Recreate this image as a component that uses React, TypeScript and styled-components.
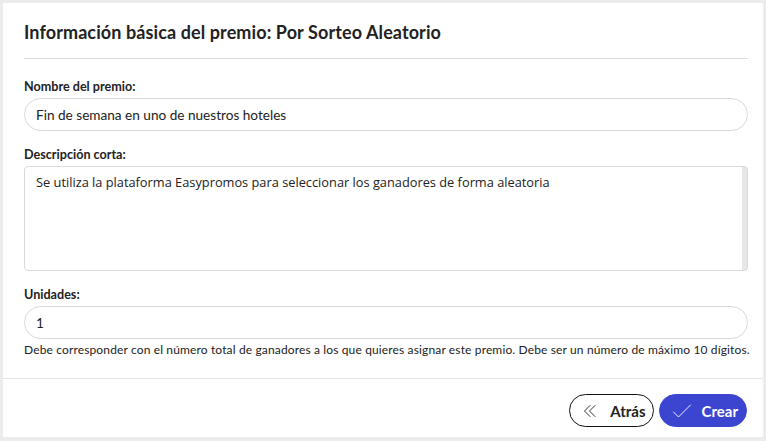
import React from "react";
import styled, { createGlobalStyle } from "styled-components";

const Global = createGlobalStyle`
  html, body { margin: 0; padding: 0; background: #ececec; }
  body { font-family: "Lato", "Noto Sans", sans-serif; color: #222; }
  * { box-sizing: border-box; }
`;

const Page = styled.div`
  padding: 3px;
  width: 766px;
  height: 441px;
`;

const Card = styled.div`
  background: #fff;
  width: 760px;
  height: 434px;
  display: flex;
  flex-direction: column;
`;

const Header = styled.div`
  padding: 17px 15px 0 21px;
`;

const Title = styled.h1`
  margin: 0;
  font-size: 18px;
  letter-spacing: 0.1px;
  line-height: 24px;
  font-weight: 700;
  color: #222;
  padding-bottom: 14px;
  border-bottom: 1px solid #dcdcdc;
`;

const Body = styled.div`
  padding: 19px 15px 0 21px;
  display: flex;
  flex-direction: column;
`;

const Field = styled.div<{ $gap?: number }>`
  display: flex;
  flex-direction: column;
  margin-bottom: ${(p) => p.$gap ?? 15}px;
`;

const Label = styled.label`
  font-size: 12.6px;
  line-height: 18px;
  font-weight: 700;
  color: #222;
  margin-bottom: 2px;
`;

const Input = styled.input`
  height: 33px;
  width: 100%;
  border: 1px solid #d9d9d9;
  border-radius: 17px;
  padding: 0 11px;
  font-family: "Lato", "Noto Sans", sans-serif;
  font-size: 13.6px;
  color: #222;
  outline: none;
  background: #fff;
`;

const TextArea = styled.textarea`
  height: 105px;
  width: 100%;
  border: 1px solid #d9d9d9;
  border-radius: 4px;
  padding: 6px 11px;
  font-family: "Open Sans", "DejaVu Sans", sans-serif;
  font-size: 12.8px;
  line-height: 18px;
  color: #222;
  resize: none;
  overflow: hidden;
  outline: none;
  background: linear-gradient(to left, #e7e7e7 5px, #fff 5px);
`;

const Help = styled.div`
  margin-top: 4px;
  font-size: 12px;
  letter-spacing: 0.14px;
  line-height: 14px;
  color: #222;
  white-space: nowrap;
`;

const Footer = styled.div`
  margin-top: auto;
  border-top: 1px solid #e6e6e6;
  height: 59px;
  padding: 15px 16px 0 0;
  display: flex;
  justify-content: flex-end;
  align-items: flex-start;
  gap: 5px;
`;

const Button = styled.button<{ $primary?: boolean }>`
  height: 33px;
  border-radius: 17px;
  display: flex;
  align-items: center;
  gap: ${(p) => (p.$primary ? 10 : 13)}px;
  padding: 0 ${(p) => (p.$primary ? 8 : 7)}px 0 ${(p) => (p.$primary ? 12 : 13)}px;
  font-family: "Lato", "Noto Sans", sans-serif;
  font-size: 15px;
  font-weight: 700;
  cursor: pointer;
  border: 1px solid ${(p) => (p.$primary ? "#3c45cf" : "#111")};
  background: ${(p) => (p.$primary ? "#3c45cf" : "#fff")};
  color: ${(p) => (p.$primary ? "#fff" : "#222")};
`;

const DoubleChevron = () => (
  <svg width="14" height="16" viewBox="0 0 14 16" fill="none" stroke="#333" strokeWidth="1" strokeLinecap="round" strokeLinejoin="round">
    <path d="M7 2.5 L1.5 8 L7 13.5" />
    <path d="M12 2.5 L6.5 8 L12 13.5" />
  </svg>
);

const Check = () => (
  <svg width="20" height="16" viewBox="0 0 20 16" fill="none" stroke="#fff" strokeWidth="0.9" strokeLinecap="round" strokeLinejoin="round">
    <path d="M1.5 9 L6.5 14 L18.5 2" />
  </svg>
);

export default function App() {
  return (
    <>
      <Global />
      <Page>
        <Card>
          <Header>
            <Title>Información básica del premio: Por Sorteo Aleatorio</Title>
          </Header>
          <Body>
            <Field>
              <Label>Nombre del premio:</Label>
              <Input readOnly defaultValue="Fin de semana en uno de nuestros hoteles" />
            </Field>
            <Field>
              <Label>Descripción corta:</Label>
              <TextArea
                readOnly
                defaultValue="Se utiliza la plataforma Easypromos para seleccionar los ganadores de forma aleatoria"
              />
            </Field>
            <Field $gap={0}>
              <Label>Unidades:</Label>
              <Input readOnly defaultValue="1" />
              <Help>
                Debe corresponder con el número total de ganadores a los que quieres asignar este premio. Debe ser un número de máximo 10 dígitos.
              </Help>
            </Field>
          </Body>
          <Footer>
            <Button>
              <DoubleChevron />
              Atrás
            </Button>
            <Button $primary>
              <Check />
              Crear
            </Button>
          </Footer>
        </Card>
      </Page>
    </>
  );
}
